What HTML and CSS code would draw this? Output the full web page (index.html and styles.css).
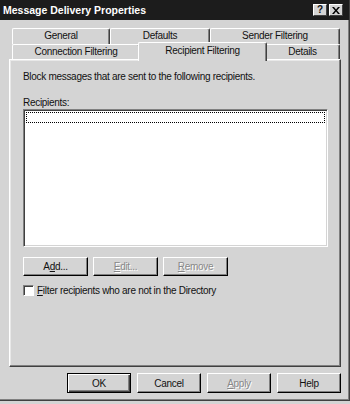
FILE: index.html
```html
<!DOCTYPE html>
<html>
<head>
<meta charset="utf-8">
<link rel="stylesheet" href="styles.css">
</head>
<body>
<div class="dialog">
  <div class="titlebar">
    <span class="title">Message Delivery Properties</span>
    <div class="tb-btns">
      <span class="tb-btn">?</span>
      <span class="tb-btn tb-close">
        <svg width="8" height="7" viewBox="0 0 8 7"><path d="M0 0h2l2 2.5L6 0h2L5 3.5 8 7H6L4 4.5 2 7H0l3-3.5z" fill="#000"/></svg>
      </span>
    </div>
  </div>
  <div class="body">
    <div class="tabs">
      <div class="tabrow back">
        <div class="tab t-general">General</div>
        <div class="tab t-defaults">Defaults</div>
        <div class="tab t-sender">Sender Filtering</div>
      </div>
      <div class="tabrow front">
        <div class="tab t-conn">Connection Filtering</div>
        <div class="tab t-recip selected">Recipient Filtering</div>
        <div class="tab t-details">Details</div>
      </div>
    </div>
    <div class="panel">
      <p class="desc">Block messages that are sent to the following recipients.</p>
      <div class="label">Recipients:</div>
      <div class="listbox"><div class="focus"></div></div>
      <div class="btnrow">
        <div class="btn">A<u>d</u>d...</div>
        <div class="btn disabled"><u>E</u>dit...</div>
        <div class="btn disabled"><u>R</u>emove</div>
      </div>
      <div class="check"><span class="box"></span><span><u>F</u>ilter recipients who are not in the Directory</span></div>
    </div>
    <div class="footer">
      <div class="btn fbtn default">OK</div>
      <div class="btn fbtn">Cancel</div>
      <div class="btn fbtn disabled"><u>A</u>pply</div>
      <div class="btn fbtn">Help</div>
    </div>
  </div>
</div>
</body>
</html>
```

FILE: styles.css
```css
* { box-sizing: border-box; }
html, body { margin: 0; padding: 0; }
body {
  width: 350px;
  height: 404px;
  overflow: hidden;
  background: #d4d4d4;
  font-family: "Liberation Sans", Arial, sans-serif;
  font-size: 10px;
  letter-spacing: -0.3px;
  color: #111;
}
.dialog {
  width: 350px;
  height: 401px;
  background: #d4d4d4;
  border-right: 1px solid #404040;
  border-bottom: 1px solid #404040;
  box-shadow: inset -1px -1px 0 #808080;
  display: flex;
  flex-direction: column;
}
.titlebar {
  height: 20px;
  background: #1c1c1c;
  display: flex;
  align-items: center;
  justify-content: space-between;
  padding: 0 6px 0 3px;
}
.title {
  color: #fff;
  font-weight: bold;
  font-size: 10.5px;
  letter-spacing: 0;
}
.tb-btns { display: flex; gap: 2px; }
.tb-btn {
  width: 14px;
  height: 12px;
  background: #d4d4d4;
  border-top: 1px solid #fff;
  border-left: 1px solid #fff;
  border-right: 1px solid #404040;
  border-bottom: 1px solid #404040;
  font-weight: bold;
  font-size: 10px;
  letter-spacing: 0;
  line-height: 10px;
  text-align: center;
  display: flex;
  align-items: center;
  justify-content: center;
}
.body {
  padding: 8px 0 0 9px;
  flex: 1;
  display: flex;
  flex-direction: column;
}
.tabs {
  padding-left: 3px;
  display: flex;
  flex-direction: column;
}
.tabrow { display: flex; }
.tabrow.back { height: 16px; }
.tabrow.front { height: 15px; }
.tab {
  background: #d4d4d4;
  border-top: 1px solid #fff;
  border-left: 1px solid #fff;
  border-right: 1px solid #404040;
  box-shadow: inset -1px 0 0 #808080;
  border-radius: 2px 2px 0 0;
  text-align: center;
  line-height: 14px;
  white-space: nowrap;
}
.t-general { width: 98px; }
.t-defaults { width: 100px; }
.t-sender { width: 130px; }
.t-conn { width: 128px; }
.t-recip { width: 125px; }
.t-details { width: 75px; }
.tab.selected {
  position: relative;
  z-index: 2;
  margin: -2px -2px 0 -2px;
  width: 129px;
  height: 19px;
  padding-top: 1px;
}
.panel {
  width: 332px;
  height: 308px;
  border-top: 1px solid #fff;
  border-left: 1px solid #fff;
  border-right: 1px solid #404040;
  border-bottom: 1px solid #404040;
  box-shadow: inset -1px -1px 0 #808080, inset 1px 1px 0 #e8e8e8;
  padding: 10px 11px 0 13px;
  position: relative;
  z-index: 1;
}
.desc {
  margin: 0 0 14px;
  line-height: 13px;
}
.label {
  line-height: 12px;
}
.listbox {
  width: 305px;
  height: 138px;
  background: #fff;
  border-top: 1px solid #808080;
  border-left: 1px solid #808080;
  border-right: 1px solid #fff;
  border-bottom: 1px solid #fff;
  box-shadow: inset 1px 1px 0 #404040, inset -1px -1px 0 #d4d4d4;
  padding: 2px;
}
.focus {
  height: 11px;
  border: 1px dotted #000;
}
.btnrow {
  display: flex;
  gap: 5px;
  margin-top: 10px;
}
.btn {
  width: 65px;
  height: 19px;
  background: #d4d4d4;
  border-top: 1px solid #fff;
  border-left: 1px solid #fff;
  border-right: 1px solid #000;
  border-bottom: 1px solid #000;
  box-shadow: inset -1px -1px 0 #808080;
  display: flex;
  align-items: center;
  justify-content: center;
}
.btn.disabled {
  color: #888;
  text-shadow: 1px 1px 0 #fff;
}
.check {
  display: flex;
  align-items: center;
  gap: 3px;
  margin-top: 9px;
}
.box {
  width: 11px;
  height: 11px;
  background: #fff;
  border-top: 1px solid #808080;
  border-left: 1px solid #808080;
  border-right: 1px solid #fff;
  border-bottom: 1px solid #fff;
  box-shadow: inset 1px 1px 0 #404040;
}
.footer {
  display: flex;
  gap: 6px;
  padding-left: 58px;
  margin-top: 6px;
}
.fbtn { width: 64px; height: 20px; }
.fbtn.default {
  border: 1px solid #000;
  box-shadow: inset 1px 1px 0 #fff, inset -1px -1px 0 #404040, inset -2px -2px 0 #808080;
}
```
